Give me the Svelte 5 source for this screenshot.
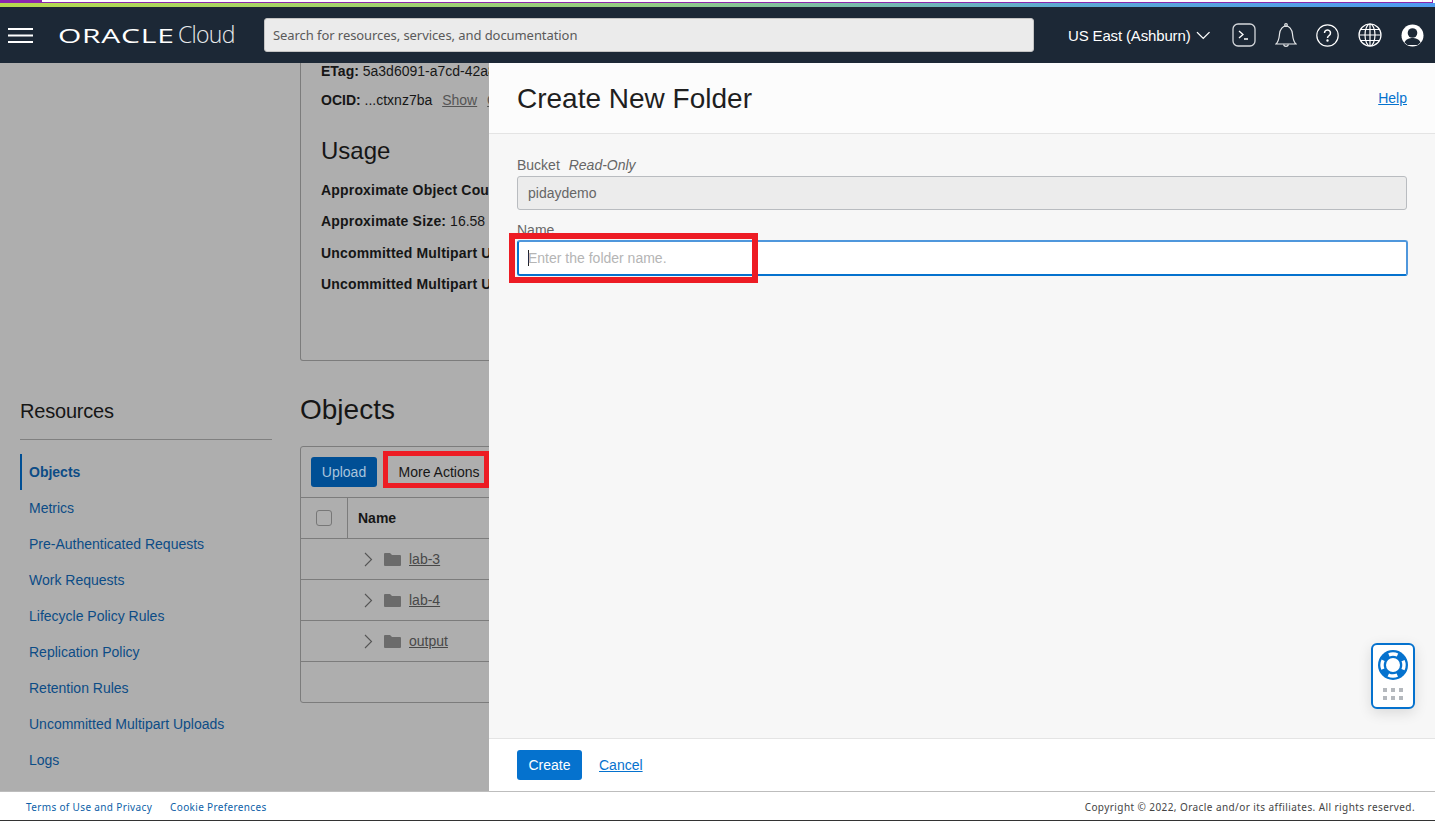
<script>
  const stats = [
    { label: 'Approximate Object Count:', value: '4' },
    { label: 'Approximate Size:', value: '16.58 MiB' },
    { label: 'Uncommitted Multipart Uploads Count:', value: '0' },
    { label: 'Uncommitted Multipart Uploads Size:', value: '0 bytes' }
  ]
  const resources = [
    'Objects',
    'Metrics',
    'Pre-Authenticated Requests',
    'Work Requests',
    'Lifecycle Policy Rules',
    'Replication Policy',
    'Retention Rules',
    'Uncommitted Multipart Uploads',
    'Logs'
  ]
  const folders = ['lab-3', 'lab-4', 'output']
</script>

<div class="app">
  <div class="stripe"><span></span></div>
  <div class="rainbow"></div>

  <header class="topbar">
    <svg class="burger" width="25" height="15" viewBox="0 0 25 15"><path d="M0 1h25M0 7.500h25M0 14h25" stroke="#fff" stroke-width="2" /></svg>
    <div class="logo"><span class="oracle">ORACLE</span><span class="cloud">Cloud</span></div>
    <div class="search">Search for resources, services, and documentation</div>
    <div class="region">
      US East (Ashburn)
      <svg width="15" height="9" viewBox="0 0 15 9"><path d="M1 1l6.500 6.500L14 1" fill="none" stroke="#fff" stroke-width="1.400" /></svg>
    </div>
    <div class="icons">
      <svg width="24" height="24" viewBox="0 0 24 24" fill="none" stroke="#d5d8dc" stroke-width="1.300"><rect x="1" y="1" width="22" height="22" rx="5" /><path d="M7 8l4 3.500L7 15M12 16h4" stroke="#fff" /></svg>
      <svg width="22" height="24" viewBox="0 0 22 24" fill="none" stroke="#e6e8ea" stroke-width="1.200"><path d="M1 21c3-3 3-5 3.500-10S8 3 11 3s6 3 6.500 8 .5 7 3.500 10z" /><circle cx="11" cy="2" r="1.300" /><path d="M8.500 21.500a2.600 2.600 0 0 0 5 0" /></svg>
      <svg width="23" height="23" viewBox="0 0 23 23" fill="none" stroke="#fff" stroke-width="1.200"><circle cx="11.500" cy="11.500" r="10.700" /><path d="M8.500 9a3 3 0 1 1 4.600 2.500c-1 .7-1.600 1.200-1.600 2.500" stroke-width="1.500" /><circle cx="11.500" cy="16.500" r=".6" fill="#fff" /></svg>
      <svg width="24" height="24" viewBox="0 0 24 24" fill="none" stroke="#fff" stroke-width="1.200"><circle cx="12" cy="12" r="11" /><ellipse cx="12" cy="12" rx="5" ry="11" /><path d="M12 1v22M1 12h22M2.500 6.500h19M2.500 17.500h19" /></svg>
      <svg width="23" height="23" viewBox="0 0 23 23"><circle cx="11.500" cy="11.500" r="11" fill="#fff" /><circle cx="11.500" cy="9" r="4.800" fill="#1c2836" /><path d="M3.500 18.500c1.500-3.500 5-4.500 8-4.500s6.500 1 8 4.500l-3 2.500h-10z" fill="#1c2836" /></svg>
    </div>
  </header>

  <main class="main">
    <div class="backdrop">
      <div class="page">
        <div></div>
        <section class="details">
          <p class="line"><b>ETag:</b> 5a3d6091-a7cd-42a8-9f1e-7c2b</p>
          <p class="line ocid"><b>OCID:</b> ...ctxnz7ba <u>Show</u> <u>Copy</u></p>
          <h2>Usage</h2>
          {#each stats as stat}
            <p class="stat"><b>{stat.label}</b> {stat.value}</p>
          {/each}
        </section>

        <nav class="resources">
          <h3>Resources</h3>
          <ul>
            {#each resources as item, i}
              <li class:current={i === 0}>{item}</li>
            {/each}
          </ul>
        </nav>

        <section class="objects">
          <h2>Objects</h2>
          <div class="table">
            <div class="toolbar">
              <span class="upload">Upload</span>
              <span class="more">More Actions<i class="mark"></i></span>
            </div>
            <div class="row head">
              <span class="check"><i></i></span>
              <b>Name</b>
            </div>
            {#each folders as folder}
              <div class="row">
                <svg class="chev" width="9" height="15" viewBox="0 0 9 15"><path d="M1 1l6.500 6.500L1 14" fill="none" stroke="#555" stroke-width="1.100" /></svg>
                <svg class="folder" width="17" height="13" viewBox="0 0 17 13"><path d="M0 1q0-1 1-1h5l2 2h8q1 0 1 1v9q0 1-1 1H1q-1 0-1-1z" fill="#6b6b6b" /></svg>
                <u>{folder}</u>
              </div>
            {/each}
            <div class="row empty"></div>
          </div>
        </section>
      </div>
    </div>

    <aside class="panel">
      <div class="panel-head">
        <h1>Create New Folder</h1>
        <a href="#help">Help</a>
      </div>
      <div class="panel-body">
        <label for="bucket">Bucket <em>Read-Only</em></label>
        <div id="bucket" class="field readonly">pidaydemo</div>
        <label class="name-label" for="folder">Name</label>
        <div id="folder" class="field focused"><span class="caret"></span>Enter the folder name.<i class="mark"></i></div>
      </div>
      <div class="panel-foot">
        <span class="create">Create</span>
        <a href="#cancel">Cancel</a>
      </div>
      <div class="help-widget">
        <svg width="30" height="30" viewBox="0 0 30 30">
          <circle cx="15" cy="15" r="15" fill="#0572ce" />
          <circle cx="15" cy="15" r="7" fill="#fff" />
          <circle cx="15" cy="15" r="11" fill="none" stroke="#fff" stroke-width="3.400" stroke-dasharray="9.300 7.980" stroke-dashoffset="4.650" transform="rotate(-90 15 15)" />
        </svg>
        <div class="dots">
          {#each Array(6) as _}<span></span>{/each}
        </div>
      </div>
    </aside>
  </main>

  <footer class="legal">
    <a href="#terms">Terms of Use and Privacy</a>
    <a href="#cookies">Cookie Preferences</a>
    <span>Copyright © 2022, Oracle and/or its affiliates. All rights reserved.</span>
  </footer>
</div>

<style>
  :global(body) {
    margin: 0;
    overflow: hidden;
  }

  .app {
    width: 1435px;
    height: 821px;
    display: flex;
    flex-direction: column;
    font-family: 'Liberation Sans', Arial, sans-serif;
    font-size: 14px;
    color: #1f1f1f;
    background: #fff;
  }

  .stripe {
    height: 2px;
    margin-right: 2px;
    border-bottom: 1px solid #8c27ad;
    border-right: 1px solid #8c27ad;
    background: #fff;
  }

  .stripe span {
    display: block;
    width: 42px;
    height: 2px;
    background: #8c27ad;
  }

  .rainbow {
    height: 4px;
    background: linear-gradient(90deg, #b6da4e 0%, #93cc84 45%, #5ba9d4 75%, #4f9bf0 100%);
  }

  .topbar {
    height: 56px;
    flex: none;
    display: flex;
    align-items: center;
    background: #1c2836;
    color: #fff;
  }

  .burger {
    margin-left: 8px;
  }

  .logo {
    width: 206px;
    margin-left: 25px;
    margin-bottom: 2px;
    display: flex;
    align-items: baseline;
    white-space: nowrap;
  }

  .oracle {
    width: 120px;
    font-family: 'Open Sans', sans-serif;
    font-size: 20px;
    line-height: 1;
    letter-spacing: 0.5px;
    transform: scaleX(1.5);
    transform-origin: left;
  }

  .cloud {
    font-family: 'Open Sans', sans-serif;
    font-weight: 300;
    font-size: 23px;
    letter-spacing: -0.7px;
    color: #e8eaec;
  }

  .search {
    width: 770px;
    height: 34px;
    padding-left: 8px;
    box-sizing: border-box;
    line-height: 33px;
    border: 1px solid #c4c4c4;
    border-radius: 3px;
    background: #ebebeb;
    color: #5a5a5a;
    font-family: 'Noto Sans', sans-serif;
    font-size: 13px;
    letter-spacing: -0.07px;
  }

  .region {
    margin-left: 34px;
    display: flex;
    align-items: center;
    gap: 5px;
    font-size: 15px;
    letter-spacing: -0.15px;
    white-space: nowrap;
    width: 142px;
  }

  .icons {
    margin-left: 22px;
    display: flex;
    align-items: center;
    gap: 19px;
  }

  .main {
    flex: 1;
    display: flex;
    min-height: 0;
    position: relative;
  }

  .backdrop {
    width: 489px;
    flex: none;
    overflow: hidden;
    background: #aeaeae;
    color: #161616;
  }

  .page {
    display: grid;
    grid-template-columns: 252px 900px;
    column-gap: 28px;
    padding-left: 20px;
  }

  .details {
    height: 298px;
    padding: 0 20px;
    box-sizing: border-box;
    border: 1px solid #7c7c7c;
    border-top: none;
    border-radius: 0 0 3px 3px;
  }

  .details p {
    margin: 0;
    white-space: nowrap;
  }

  .line {
    line-height: 16px;
  }

  .details .ocid {
    margin-top: 13px;
  }

  .ocid u {
    margin-left: 6px;
    color: #555;
  }

  .details h2 {
    margin: 29px 0 17px;
    font-size: 24px;
    font-weight: 400;
    line-height: 28px;
  }

  .details .stat {
    height: 31.300px;
    line-height: 16px;
  }

  .stat b {
    letter-spacing: 0.18px;
  }

  .resources h3 {
    margin: 38px 0 0;
    padding-bottom: 16px;
    border-bottom: 1px solid #808080;
    font-size: 20px;
    font-weight: 400;
    line-height: 24px;
    letter-spacing: -0.2px;
  }

  .resources ul {
    list-style: none;
    margin: 14px 0 0;
    padding: 0;
  }

  .resources li {
    height: 36px;
    line-height: 36px;
    padding-left: 9px;
    color: #0c4c86;
  }

  .resources li.current {
    padding-left: 7px;
    border-left: 2px solid #004f95;
    font-weight: 700;
  }

  .objects h2 {
    margin: 33px 0 21px;
    font-size: 28px;
    font-weight: 400;
    line-height: 31px;
  }

  .table {
    border: 1px solid #7c7c7c;
    border-radius: 3px;
  }

  .toolbar {
    height: 50px;
    box-sizing: border-box;
    padding-left: 10px;
    display: flex;
    align-items: center;
    gap: 10px;
  }

  .upload {
    width: 66px;
    height: 30px;
    line-height: 30px;
    text-align: center;
    border-radius: 3px;
    background: #004f95;
    color: #a9c4dc;
  }

  .more {
    position: relative;
    width: 104px;
    height: 30px;
    line-height: 30px;
    text-align: center;
  }

  .mark {
    position: absolute;
    border: 5px solid #ed1c24;
    box-sizing: border-box;
    pointer-events: none;
  }

  .more .mark {
    left: -4px;
    top: -6px;
    width: 106px;
    height: 37px;
  }

  .row {
    height: 41px;
    box-sizing: border-box;
    display: flex;
    align-items: center;
    border-top: 1px solid #7c7c7c;
    color: #484848;
  }

  .row.head {
    color: #161616;
  }

  .row b {
    margin-left: 10px;
  }

  .check {
    width: 46px;
    height: 100%;
    display: flex;
    align-items: center;
    justify-content: center;
    border-right: 1px solid #7c7c7c;
  }

  .check i {
    width: 14px;
    height: 14px;
    border: 1px solid #777;
    border-radius: 3px;
  }

  .chev {
    margin-left: 63px;
  }

  .folder {
    margin-left: 11px;
    margin-right: 8px;
  }

  .panel {
    flex: 1;
    display: flex;
    flex-direction: column;
    background: #f7f7f7;
  }

  .panel-head {
    height: 71px;
    box-sizing: border-box;
    display: flex;
    align-items: center;
    justify-content: space-between;
    padding: 0 28px;
    background: #fcfcfc;
    border-bottom: 1px solid #e4e4e4;
  }

  h1 {
    margin: 2px 0 0;
    font-size: 28px;
    font-weight: 400;
    color: #1f1f1f;
  }

  a {
    color: #0572ce;
  }

  .panel-body {
    flex: 1;
    padding: 23px 28px 0;
    display: flex;
    flex-direction: column;
  }

  label {
    line-height: 16px;
    color: #666;
  }

  label em {
    margin-left: 5px;
  }

  .name-label {
    margin-top: 12px;
  }

  .field {
    position: relative;
    box-sizing: border-box;
    border-radius: 3px;
    display: flex;
    align-items: center;
  }

  .readonly {
    height: 34px;
    margin-top: 3px;
    padding-left: 10px;
    border: 1px solid #b9bcc0;
    background: #ececec;
    color: #666;
  }

  .focused {
    height: 36px;
    margin-top: 2px;
    margin-right: -1px;
    padding-left: 9px;
    border: 2px solid #0572ce;
    border-top-color: #4f97dc;
    border-right-color: #4f97dc;
    background: #fff;
    color: #b5b5b5;
  }

  .caret {
    width: 1px;
    height: 16px;
    margin-right: -1px;
    background: #222;
  }

  .focused .mark {
    left: -10px;
    top: -9px;
    width: 249px;
    height: 50px;
    border-width: 6px;
  }

  .panel-foot {
    height: 53px;
    box-sizing: border-box;
    display: flex;
    align-items: center;
    gap: 17px;
    padding: 0 28px;
    background: #fff;
    border-top: 1px solid #e4e4e4;
  }

  .create {
    width: 65px;
    height: 30px;
    line-height: 30px;
    text-align: center;
    border-radius: 3px;
    background: #0572ce;
    color: #fff;
  }

  .help-widget {
    position: absolute;
    right: 20px;
    top: 580px;
    width: 44px;
    height: 66px;
    box-sizing: border-box;
    padding-top: 5px;
    display: flex;
    flex-direction: column;
    align-items: center;
    gap: 8px;
    border: 2px solid #0572ce;
    border-radius: 6px;
    background: #fff;
    box-shadow: 0 4px 14px rgba(0, 0, 0, 0.12);
  }

  .dots {
    display: grid;
    grid-template-columns: repeat(3, 4px);
    gap: 4px;
  }

  .dots span {
    width: 4px;
    height: 4px;
    background: #b4b8bd;
  }

  .legal {
    height: 30px;
    flex: none;
    box-sizing: border-box;
    display: flex;
    align-items: center;
    padding: 1px 20px 0 26px;
    gap: 18px;
    background: #fff;
    border-top: 1px solid #bdbdbd;
    border-bottom: 1px solid #333;
    font-family: 'Noto Sans', sans-serif;
    font-size: 10px;
    letter-spacing: 0.35px;
  }

  .legal a {
    text-decoration: none;
    color: #0d5fa8;
  }

  .legal span {
    margin-left: auto;
    letter-spacing: 0.42px;
    color: #444;
  }
</style>
